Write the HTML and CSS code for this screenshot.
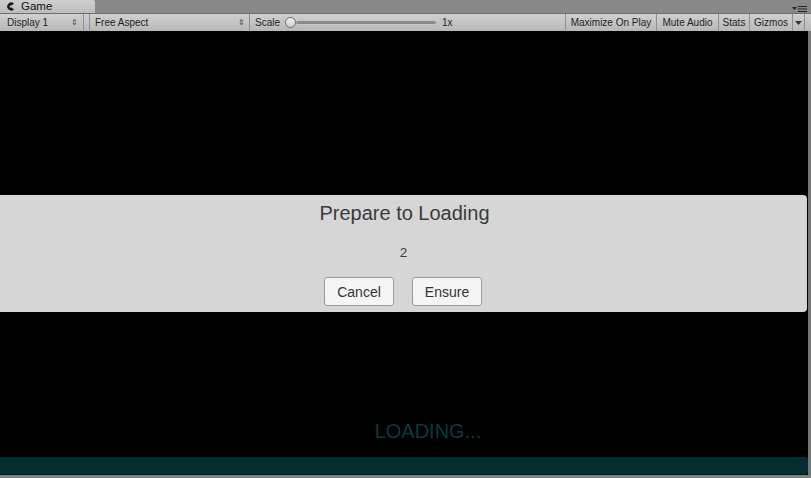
FILE: index.html
```html
<!DOCTYPE html>
<html>
<head>
<meta charset="utf-8">
<link rel="stylesheet" href="styles.css">
</head>
<body>
<div class="window">
  <div class="tabbar">
    <div class="tab">
      <svg class="tab-icon" width="8" height="9" viewBox="0 0 8 9"><path d="M7 1.6 A4 4 0 1 0 7 7.4 L4.6 5.6 A1.3 1.3 0 1 1 4.6 3.4 Z" fill="#1a1a1a"/></svg>
      <span>Game</span>
    </div>
    <div class="tab-fill"></div>
    <svg class="pane-menu" width="16" height="8" viewBox="0 0 16 8"><path d="M0 2 H5 L2.5 5 Z" fill="#222"/><rect x="6" y="1" width="9" height="1" fill="#222"/><rect x="6" y="3.5" width="9" height="1" fill="#222"/><rect x="6" y="6" width="9" height="1" fill="#222"/></svg>
  </div>
  <div class="toolbar">
    <div class="tb-item w-display"><span>Display 1</span><span class="updown">&#8661;</span></div>
    <div class="tb-gap"></div>
    <div class="tb-item w-aspect"><span>Free Aspect</span><span class="updown">&#8661;</span></div>
    <div class="tb-item w-scale">
      <span>Scale</span>
      <div class="slider"><div class="knob"></div><div class="track"></div></div>
      <span class="scale-val">1x</span>
    </div>
    <div class="tb-item btn maxi">Maximize On Play</div>
    <div class="tb-item btn mute">Mute Audio</div>
    <div class="tb-item btn stats">Stats</div>
    <div class="tb-item btn gizmos">Gizmos</div>
    <div class="tb-item btn caret"><svg width="7" height="4" viewBox="0 0 7 4"><path d="M0 0 H7 L3.5 4 Z" fill="#333"/></svg></div>
  </div>
  <div class="stage">
    <div class="game">
      <div class="dialog">
        <div class="dlg-title">Prepare to Loading</div>
        <div class="dlg-count">2</div>
        <div class="dlg-buttons">
          <div class="dlg-btn">Cancel</div>
          <div class="dlg-btn">Ensure</div>
        </div>
      </div>
      <div class="loading">LOADING...</div>
      <div class="progress"></div>
    </div>
    <div class="edge"></div>
  </div>
</div>
</body>
</html>
```
FILE: styles.css
```css
html, body {
  margin: 0;
  padding: 0;
  background: #7f7f7f;
}
.window {
  width: 811px;
  height: 478px;
  display: flex;
  flex-direction: column;
  overflow: hidden;
  font-family: "Liberation Sans", Arial, sans-serif;
}
.tabbar {
  height: 13px;
  display: flex;
  align-items: stretch;
  background: #888888;
  position: relative;
}
.tab {
  width: 95px;
  display: flex;
  align-items: center;
  gap: 6px;
  padding-left: 7px;
  box-sizing: border-box;
  background: linear-gradient(#cfcfcf, #bdbdbd);
  border-top-right-radius: 2px;
  font-size: 11.5px;
  color: #111;
}
.tab span {
  line-height: 13px;
  margin-top: -1px;
}
.tab-fill {
  flex: 1;
}
.pane-menu {
  position: absolute;
  right: 3px;
  top: 5px;
}
.toolbar {
  height: 18px;
  display: flex;
  align-items: stretch;
  background: linear-gradient(#d0d0d0, #b8b8b8);
  border-top: 1px solid #6e6e6e;
  box-sizing: border-box;
  font-size: 10px;
  color: #222;
}
.tb-item {
  display: flex;
  align-items: center;
  border-right: 1px solid #8e8e8e;
  box-sizing: border-box;
  white-space: nowrap;
}
.w-display {
  width: 84px;
  padding-left: 7px;
  justify-content: space-between;
  padding-right: 5px;
}
.tb-gap {
  width: 5px;
  border-right: 1px solid #8e8e8e;
}
.w-aspect {
  width: 160px;
  padding-left: 5px;
  padding-right: 4px;
  justify-content: space-between;
}
.updown {
  font-size: 8px;
  color: #444;
}
.w-scale {
  width: 316px;
  padding-left: 5px;
}
.slider {
  display: flex;
  align-items: center;
  margin-left: 5px;
  width: 151px;
}
.knob {
  width: 9px;
  height: 9px;
  border-radius: 50%;
  border: 1px solid #6a6a6a;
  background: linear-gradient(#f4f4f4, #cfcfcf);
  flex: none;
}
.track {
  flex: 1;
  height: 3px;
  background: #8a8a8a;
  border-radius: 2px;
  border-bottom: 1px solid #c8c8c8;
}
.scale-val {
  margin-left: 6px;
}
.btn {
  justify-content: center;
}
.maxi {
  width: 91px;
}
.mute {
  width: 62px;
}
.stats {
  width: 31px;
}
.gizmos {
  width: 43px;
}
.caret {
  width: 12px;
  padding-top: 1px;
}
.stage {
  flex: 1;
  display: flex;
  padding-bottom: 3px;
}
.game {
  width: 808px;
  background: #000;
  display: flex;
  flex-direction: column;
  align-items: stretch;
}
.edge {
  flex: 1;
  background: #747474;
}
.dialog {
  margin-top: 164px;
  height: 117px;
  width: 807px;
  background: #d6d6d6;
  border-radius: 0 4px 4px 0;
  display: flex;
  flex-direction: column;
  align-items: center;
  color: #3a3a3a;
}
.dlg-title {
  margin-top: 6px;
  padding-left: 2px;
  font-size: 20px;
  line-height: 24px;
}
.dlg-count {
  margin-top: 20px;
  font-size: 13.5px;
  line-height: 16px;
}
.dlg-buttons {
  margin-top: 16px;
  margin-right: 1px;
  display: flex;
  gap: 18px;
}
.dlg-btn {
  width: 70px;
  height: 29px;
  box-sizing: border-box;
  border: 1px solid #9a9a9a;
  border-radius: 3px;
  background: #f5f5f5;
  display: flex;
  align-items: center;
  justify-content: center;
  font-size: 14px;
  color: #333;
}
.loading {
  margin-top: 107px;
  padding-left: 48px;
  text-align: center;
  font-size: 20px;
  line-height: 24px;
  color: #0b3a3d;
}
.progress {
  margin-top: 14px;
  height: 17px;
  background: #032e30;
  border-radius: 0 3px 3px 0;
  border-bottom: 1px solid #021e20;
}
```
